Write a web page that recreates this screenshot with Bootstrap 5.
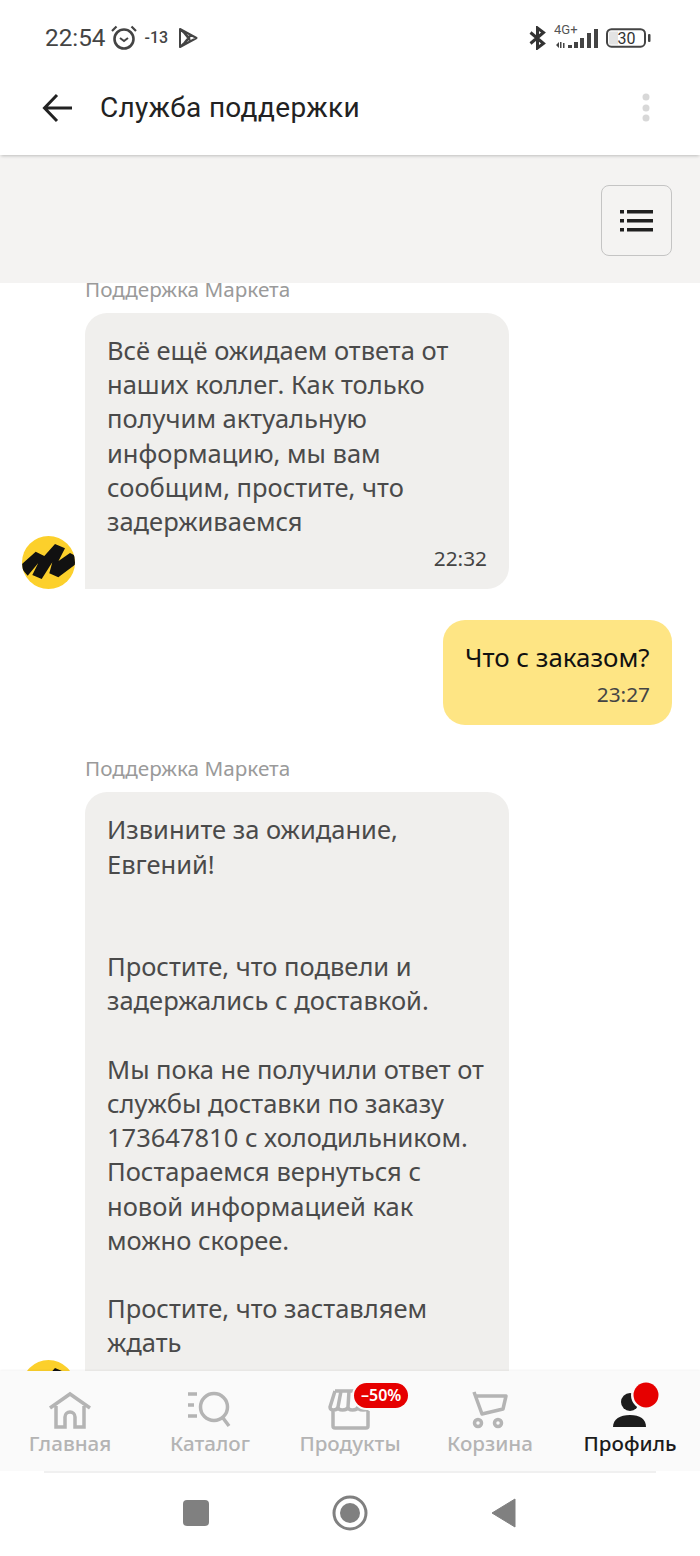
<!DOCTYPE html>
<html lang="ru">
<head>
<meta charset="utf-8">
<title>Служба поддержки</title>
<link href="https://cdn.jsdelivr.net/npm/bootstrap@5.3.0/dist/css/bootstrap.min.css" rel="stylesheet">
<style>
html,body{margin:0;background:#fff}
.phone{width:700px;height:1556px;overflow:hidden;font-family:"Noto Sans","Liberation Sans",sans-serif}
.statusbar{height:70px;padding:22px 48px 0 45px;font-family:Roboto,sans-serif;color:#444}
.clock{font-size:24.3px;line-height:32px}
.alarmtxt{font-size:16px;font-weight:500;margin-left:7px;margin-right:10px}
.apphead{height:85px;padding:0 49px 10px 42px;position:relative;z-index:2;box-shadow:0 2px 3px -1px rgba(0,0,0,.22)}
.apptitle{font-family:Roboto,sans-serif;font-size:28px;color:#222;margin-left:26px;letter-spacing:.3px}
.toolstrip{height:128px;background:#f4f3f2;padding:30px 28px 0 0}
.listbtn{width:71px;height:71px;border:1px solid #c4c4c4;border-radius:8px;background:#f4f3f2;padding:0}
.chatflow{min-height:0;overflow:hidden;padding:0 28px 0 22px}
.sender{font-size:20.7px;line-height:26px;color:#9a9a9a;margin-left:63px;margin-bottom:11px}
.sender-first{margin-top:-7px}
.sender-next{margin-top:30px}
.bubble-in{width:424px;background:#f0efed;border-radius:22px 22px 22px 0;padding:20px 22px 18px;color:#4a4a4a;font-size:25.5px;line-height:34.2px}
.bubble-tall{padding-bottom:53px}
.bubble-out{min-width:229px;background:#fee584;border-radius:22px;padding:20px 22px 18px;color:#111;font-size:25.9px;line-height:34.2px;margin-top:31px}
.stamp{font-size:20.8px;line-height:26px;text-align:right;color:#444;margin-top:7px}
.yava{width:53px;height:53px;flex:none;margin-right:10px}
.tabbar{height:100px;background:#fafafa;position:relative;z-index:2;box-shadow:0 -1px 2px rgba(0,0,0,.05)}
.tabitem{width:140px;padding-top:10px;font-size:20.6px;line-height:25px;color:#b4b4b4;font-weight:500;position:relative}
.tabitem svg{display:block;height:50px}
.tabitem.on{color:#1c1c1c}
.promo{position:absolute;left:74px;top:12px;background:#e60000;color:#fff;border-radius:13px;font-size:16px;line-height:25px;padding:0 7px;font-weight:600;white-space:nowrap;box-shadow:0 0 0 2px #fafafa}
.rule{height:2px;background:#f0f0f0;margin:0 44px}
.sysnav{height:83px;padding-bottom:3px;gap:123px}
</style>
</head>
<body>
<div class="phone d-flex flex-column">
  <div class="statusbar d-flex justify-content-between align-items-start bg-white flex-shrink-0">
    <div class="d-flex align-items-center">
      <span class="clock">22:54</span>
      <svg width="28" height="28" viewBox="0 0 28 28" class="ms-1" fill="none" stroke="#444" stroke-width="2.6"><circle cx="14" cy="15" r="9.5"/><path d="M10 14l4 3 4-3" stroke-width="2"/><path d="M2 7l4.500-4.500M26 7l-4.500-4.500" stroke-width="2.200"/></svg>
      <span class="alarmtxt">-13</span>
      <svg width="20" height="22" viewBox="0 0 20 22" fill="none" stroke="#444" stroke-width="2" stroke-linejoin="round"><path d="M2 2L18.500 11 2 20ZM2 2l9.500 9L2 20M6.500 6.500l6 7.500M6.500 15.500l6-7.500"/></svg>
    </div>
    <div class="d-flex align-items-center">
      <svg width="17" height="24" viewBox="0 0 17 24" fill="none" stroke="#333" stroke-width="3"><path d="M1.500 6.500L14.500 17.500 8.500 22V2L14.500 6.500 1.500 17.500"/></svg>
      <svg width="48" height="32" viewBox="0 -2 48 32" class="ms-2" fill="#444"><text x="0" y="10" font-family="Roboto,sans-serif" font-size="13" fill="#555">4G+</text><path d="M2 21l3-3v6zM6 18h1.500v6H6zM9 19h1.500v5H9zM14 21h4v3h-4zM20 18h4v6h-4zM26 14h4v10h-4zM33 9h4v15h-4zM40 5h4v19h-4z"/></svg>
      <svg width="46" height="20" viewBox="0 0 46 20" class="d-block ms-1" fill="none"><rect x="1" y="1.200" width="38" height="17.500" rx="4.500" stroke="#444" stroke-width="2"/><rect x="3" y="3.500" width="9" height="13" fill="#e3e3e3"/><rect x="42" y="6" width="2.500" height="8" rx="1" fill="#444"/><text x="11.500" y="16" font-family="Roboto,sans-serif" font-size="16" fill="#333">30</text></svg>
    </div>
  </div>

  <div class="apphead d-flex align-items-center bg-white flex-shrink-0">
    <svg width="32" height="30" viewBox="0 0 32 30" fill="none" stroke="#222" stroke-width="3"><path d="M30 15H3M15 2L2.500 15 15 28"/></svg>
    <span class="apptitle flex-grow-1">Служба поддержки</span>
    <svg width="10" height="30" viewBox="0 0 10 30" fill="#d8d8d8"><circle cx="5" cy="4" r="3.500"/><circle cx="5" cy="15" r="3.500"/><circle cx="5" cy="25" r="3.500"/></svg>
  </div>

  <div class="toolstrip d-flex justify-content-end flex-shrink-0">
    <button class="listbtn d-flex align-items-center justify-content-center" type="button" aria-label="Меню">
      <svg width="33" height="22" viewBox="0 0 33 22" fill="#1f1f1f"><rect x="0" y="0" width="4" height="3.500"/><rect x="7" y="0" width="26" height="3.500"/><rect x="0" y="9" width="4" height="3.500"/><rect x="7" y="9" width="26" height="3.500"/><rect x="0" y="18" width="4" height="3.500"/><rect x="7" y="18" width="26" height="3.500"/></svg>
    </button>
  </div>

  <div class="chatflow flex-grow-1">
    <div class="sender sender-first">Поддержка Маркета</div>
    <div class="d-flex align-items-end">
      <svg class="yava" viewBox="0 0 53 53"><defs><clipPath id="yclip"><circle cx="26.500" cy="26.500" r="26.500"/></clipPath><g id="ymark"><circle cx="26.500" cy="26.500" r="26.500" fill="#fcd02b"/><path clip-path="url(#yclip)" d="M0 28L13.700 15.700 22.300 20 33 8 43 12.300 36.500 25 48 17 54 20 54 28 36.300 41.300 27.300 37.300 30.300 26.300 19.700 43 10.300 39 16.300 27 5.700 39.700 0 33Z" fill="#111"/></g></defs><use href="#ymark"/></svg>
      <div class="bubble-in">
        Всё ещё ожидаем ответа от наших коллег. Как только получим актуальную информацию, мы вам сообщим, простите, что задерживаемся
        <div class="stamp">22:32</div>
      </div>
    </div>
    <div class="d-flex justify-content-end">
      <div class="bubble-out">
        Что с заказом?
        <div class="stamp">23:27</div>
      </div>
    </div>
    <div class="sender sender-next">Поддержка Маркета</div>
    <div class="d-flex align-items-end">
      <svg class="yava" viewBox="0 0 53 53"><use href="#ymark"/></svg>
      <div class="bubble-in bubble-tall">
        Извините за ожидание, Евгений!<br><br><br>Простите, что подвели и задержались с доставкой.<br><br>Мы пока не получили ответ от службы доставки по заказу 173647810 с холодильником. Постараемся вернуться с новой информацией как можно скорее.<br><br>Простите, что заставляем ждать
      </div>
    </div>
  </div>

  <div class="tabbar d-flex justify-content-between flex-shrink-0">
    <div class="tabitem text-center">
      <svg class="mx-auto" width="46" height="50" viewBox="0 0 46 50" fill="none" stroke="#b4b4b4" stroke-width="3.500"><path d="M3 27L23 13 43 27M9 25V46H18V36a5 5 0 0 1 10 0V46H37V25"/></svg>
      Главная
    </div>
    <div class="tabitem text-center">
      <svg class="mx-auto" width="46" height="50" viewBox="0 0 46 50" fill="none" stroke="#b4b4b4" stroke-width="3.500"><circle cx="27" cy="26" r="13.500"/><path d="M36 37l6 8M1 13h9M1 24h6M1 35h9"/></svg>
      Каталог
    </div>
    <div class="tabitem text-center">
      <svg class="mx-auto" width="46" height="50" viewBox="0 0 46 50" fill="none" stroke="#b4b4b4" stroke-width="3.500" stroke-linejoin="round"><path d="M8 10H36L42 26M8 10L3 26c0 4 7 4 8 0 0 4 9 4 10 0 0 4 9 4 10 0 0 4 10 4 11 0M14 10L11 26M22 10L21 26M6 30V45a2 2 0 0 0 2 2H39a2 2 0 0 0 2-2V30"/></svg>
      Продукты
      <span class="promo">–50%</span>
    </div>
    <div class="tabitem text-center">
      <svg class="mx-auto" width="46" height="50" viewBox="0 0 46 50" fill="none" stroke="#b4b4b4" stroke-width="3.500" stroke-linejoin="round"><path d="M7 11L15 33 36 28 39 15 9 15"/><circle cx="11" cy="42" r="3.500"/><circle cx="31" cy="42" r="3.500"/></svg>
      Корзина
    </div>
    <div class="tabitem on text-center">
      <svg class="mx-auto" width="60" height="50" viewBox="0 0 60 50" fill="#1c1c1c"><circle cx="30" cy="21" r="9"/><path d="M13 46c0-8 7-12 17-12s16 4 16 12z"/><circle cx="46" cy="14" r="15" fill="#fafafa"/><circle cx="46" cy="14" r="12.500" fill="#e60000"/></svg>
      Профиль
    </div>
  </div>
  <div class="rule flex-shrink-0"></div>
  <div class="sysnav d-flex justify-content-center align-items-center bg-white flex-shrink-0">
    <svg width="26" height="26" viewBox="0 0 26 26"><rect width="26" height="26" rx="4" fill="#808080"/></svg>
    <svg width="36" height="36" viewBox="0 0 36 36"><circle cx="18" cy="18" r="16" fill="none" stroke="#808080" stroke-width="3"/><circle cx="18" cy="18" r="10" fill="#808080"/></svg>
    <svg width="26" height="30" viewBox="0 0 26 30"><path d="M1 15L24 1v28z" fill="#808080" stroke="#808080" stroke-linejoin="round"/></svg>
  </div>
</div>
</body>
</html>
